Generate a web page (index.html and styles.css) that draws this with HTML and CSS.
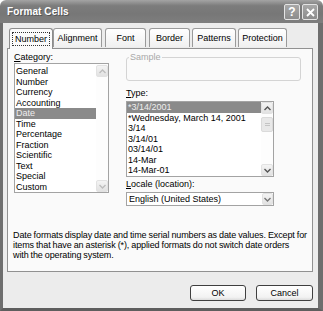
FILE: index.html
```html
<!DOCTYPE html>
<html>
	<head>
		<meta charset="UTF-8">
		<title>Format Cells</title>
		<link rel="stylesheet" href="styles.css">
	</head>
	<body>
		<div class="dialog">
			<div class="titlebar">
				<span class="title">Format Cells</span>
				<span class="tb-btns">
					<span class="tb-btn">?</span>
					<span class="tb-btn">
						<svg width="9" height="9" viewBox="0 0 9 9"><path d="M1 1L8 8M8 1L1 8" stroke="#fff" stroke-width="1.8"/></svg>
					</span>
				</span>
			</div>
			<div class="frame">
				<div class="tabs">
					<div class="tab active"><span class="focus">Number</span></div>
					<div class="tab t-align">Alignment</div>
					<div class="tab t-font">Font</div>
					<div class="tab t-border">Border</div>
					<div class="tab t-pat">Patterns</div>
					<div class="tab t-prot">Protection</div>
				</div>
				<div class="panel">
					<div class="cols">
						<div class="col-left">
							<div class="label"><u>C</u>ategory:</div>
							<div class="listbox cat">
								<ul>
									<li>General</li>
									<li>Number</li>
									<li>Currency</li>
									<li>Accounting</li>
									<li class="sel">Date</li>
									<li>Time</li>
									<li>Percentage</li>
									<li>Fraction</li>
									<li>Scientific</li>
									<li>Text</li>
									<li>Special</li>
									<li>Custom</li>
								</ul>
								<div class="vscroll off">
									<span class="sb-btn"><svg width="7" height="5" viewBox="0 0 7 5"><path d="M0.5 4L3.5 1L6.5 4" fill="none" stroke="currentColor" stroke-width="1.4"/></svg></span>
									<span class="sb-track"></span>
									<span class="sb-btn"><svg width="7" height="5" viewBox="0 0 7 5"><path d="M0.5 1L3.5 4L6.5 1" fill="none" stroke="currentColor" stroke-width="1.4"/></svg></span>
								</div>
							</div>
						</div>
						<div class="col-right">
							<div class="sample"><span class="legend">Sample</span></div>
							<div class="label type-label"><u>T</u>ype:</div>
							<div class="listbox type">
								<ul>
									<li class="sel">*3/14/2001</li>
									<li>*Wednesday, March 14, 2001</li>
									<li>3/14</li>
									<li>3/14/01</li>
									<li>03/14/01</li>
									<li>14-Mar</li>
									<li>14-Mar-01</li>
								</ul>
								<div class="vscroll">
									<span class="sb-btn"><svg width="7" height="5" viewBox="0 0 7 5"><path d="M0.5 4L3.5 1L6.5 4" fill="none" stroke="currentColor" stroke-width="1.4"/></svg></span>
									<span class="sb-track"><span class="sb-thumb"><i></i></span></span>
									<span class="sb-btn"><svg width="7" height="5" viewBox="0 0 7 5"><path d="M0.5 1L3.5 4L6.5 1" fill="none" stroke="currentColor" stroke-width="1.4"/></svg></span>
								</div>
							</div>
							<div class="label locale-label"><u>L</u>ocale (location):</div>
							<div class="combo">
								<span class="combo-text">English (United States)</span>
								<span class="sb-btn dd"><svg width="7" height="5" viewBox="0 0 7 5"><path d="M0.5 1L3.5 4L6.5 1" fill="none" stroke="currentColor" stroke-width="1.4"/></svg></span>
							</div>
						</div>
					</div>
					<p class="desc">Date formats display date and time serial numbers as date values. Except for<br>items that have an asterisk (*), applied formats do not switch date orders<br>with the operating system.</p>
				</div>
				<div class="buttons">
					<button class="btn">OK</button>
					<button class="btn btn-cancel">Cancel</button>
				</div>
			</div>
		</div>
	</body>
</html>
```

FILE: styles.css
```css
body{
	margin: 0;
	background: #fff;
}
ul{
	margin: 0;
	padding: 0;
	list-style: none;
}

.dialog{
	width: 323px;
	height: 311px;
	display: flex;
	flex-direction: column;
	font-family: "Liberation Sans", Arial, sans-serif;
	font-size: 9px;
	color: #000;
}

/* title bar */
.titlebar{
	height: 23px;
	flex: none;
	display: flex;
	align-items: center;
	justify-content: space-between;
	padding: 0 5px 0 7px;
	box-sizing: border-box;
	background: linear-gradient(#a4a4a4, #7c7c7c 25%, #777 60%, #7e7e7e);
	border-radius: 6px 6px 0 0;
}
.title{
	color: #fff;
	font-weight: bold;
	font-size: 10px;
	letter-spacing: 0.1px;
	text-shadow: 1px 1px 0 #555;
}
.tb-btns{
	display: flex;
	gap: 2px;
	margin-top: 1px;
}
.tb-btn{
	width: 14px;
	height: 14px;
	display: flex;
	align-items: center;
	justify-content: center;
	border: 1px solid #e4e4e4;
	border-radius: 2px;
	background: linear-gradient(#a8a8a8, #8c8c8c);
	color: #fff;
	font-weight: bold;
	font-size: 12px;
}

/* window frame */
.frame{
	flex: 1;
	background: #ececec;
	border-left: 3px solid #6e6e6e;
	border-right: 5px solid #6e6e6e;
	border-bottom: 3px solid #5e5e5e;
	padding: 5px 5px 0 4px;
	display: flex;
	flex-direction: column;
}

/* tabs */
.tabs{
	display: flex;
	align-items: flex-end;
	gap: 3px;
	padding-left: 2px;
	height: 20px;
	position: relative;
	z-index: 1;
}
.tab{
	height: 19px;
	box-sizing: border-box;
	border: 1px solid #9a9a9a;
	border-bottom: none;
	border-radius: 3px 3px 0 0;
	background: linear-gradient(#fff, #f0f0f0);
	display: flex;
	align-items: center;
	justify-content: center;
	margin-bottom: 1px;
}
.tab.active{
	width: 44px;
	height: 21px;
	margin-bottom: -1px;
	margin-right: -3px;
	background: #fbfbfb;
	border-color: #8c8c8c;
}
.focus{
	border: 1px dotted #333;
	padding: 1px 2px;
	line-height: 10px;
}
.t-align{ width: 49px; }
.t-font{ width: 41px; }
.t-border{ width: 41px; }
.t-pat{ width: 44px; margin-left: -1px; }
.t-prot{ width: 49px; margin-left: -1px; }

/* panel */
.panel{
	height: 224px;
	box-sizing: border-box;
	border: 1px solid #919191;
	background: #fafafa;
	padding: 3px 3px 0 5px;
}
.cols{
	display: flex;
	gap: 17px;
}
.col-left{
	width: 95px;
	margin-left: 1px;
}
.col-right{
	width: 176px;
}
.label{
	line-height: 10px;
	height: 10px;
}
.label u{
	text-decoration: underline;
}

/* list boxes */
.listbox{
	display: flex;
	border: 1px solid #a3a3a3;
	background: #fff;
	box-sizing: border-box;
	margin-top: 1px;
}
.listbox ul{
	flex: 1;
	padding-top: 2px;
}
.listbox li{
	height: 10.5px;
	line-height: 10.5px;
	padding-left: 1px;
	white-space: nowrap;
}
.listbox li.sel{
	background: #8a8a8a;
	color: #eee;
}
.cat{
	height: 130px;
}
.type{
	width: 148px;
	height: 76px;
	margin-top: 3px;
}
.type ul{
	padding-top: 0;
}

.vscroll{
	width: 12px;
	display: flex;
	flex-direction: column;
	background: #fdfdfd;
	color: #555;
}
.vscroll.off{
	color: #bdbdbd;
	padding-top: 1px;
}
.sb-btn{
	height: 12px;
	flex: none;
	display: flex;
	align-items: center;
	justify-content: center;
	box-sizing: border-box;
	border: 1px solid #e2e2e2;
	border-radius: 2px;
	background: linear-gradient(#f4f4f4, #e2e2e2);
}
.sb-track{
	flex: 1;
	padding-top: 3px;
}
.sb-thumb{
	display: flex;
	align-items: center;
	justify-content: center;
	height: 15px;
	box-sizing: border-box;
	border: 1px solid #dadada;
	border-radius: 2px;
	background: #e8e8e8;
}
.sb-thumb i{
	width: 5px;
	height: 3px;
	border-top: 1px solid #c4c4c4;
	border-bottom: 1px solid #c4c4c4;
	box-sizing: border-box;
}

/* sample group */
.sample{
	position: relative;
	margin-top: 5px;
	width: 175px;
	height: 24px;
	box-sizing: border-box;
	border: 1px solid #d4d4d4;
	border-radius: 3px;
}
.legend{
	position: absolute;
	top: -6px;
	left: 2px;
	padding: 0 1px;
	background: #fafafa;
	color: #a8a8a8;
	line-height: 10px;
}
.type-label{
	margin-top: 7px;
}
.locale-label{
	margin-top: 2px;
}

/* combo */
.combo{
	display: flex;
	align-items: center;
	width: 148px;
	height: 14px;
	box-sizing: border-box;
	margin-top: 3px;
	border: 1px solid #a3a3a3;
	background: #fff;
	padding-left: 2px;
	color: #555;
}
.combo-text{
	flex: 1;
	color: #000;
}
.dd{
	width: 11px;
	height: 12px;
	color: #777;
}

.desc{
	margin: 24px 0 0 0;
	line-height: 10px;
	letter-spacing: -0.12px;
	word-spacing: -0.3px;
	white-space: nowrap;
}

/* buttons */
.buttons{
	display: flex;
	justify-content: flex-end;
	gap: 10px;
	margin-top: 13px;
}
.btn{
	width: 56px;
	height: 16px;
	padding: 0;
	font: inherit;
	color: #000;
	border: 1px solid #3f3f3f;
	border-radius: 3px;
	background: linear-gradient(#fff, #f2f2f2 80%, #dcdcdc);
}
.btn-cancel{
	width: 57px;
}
```
